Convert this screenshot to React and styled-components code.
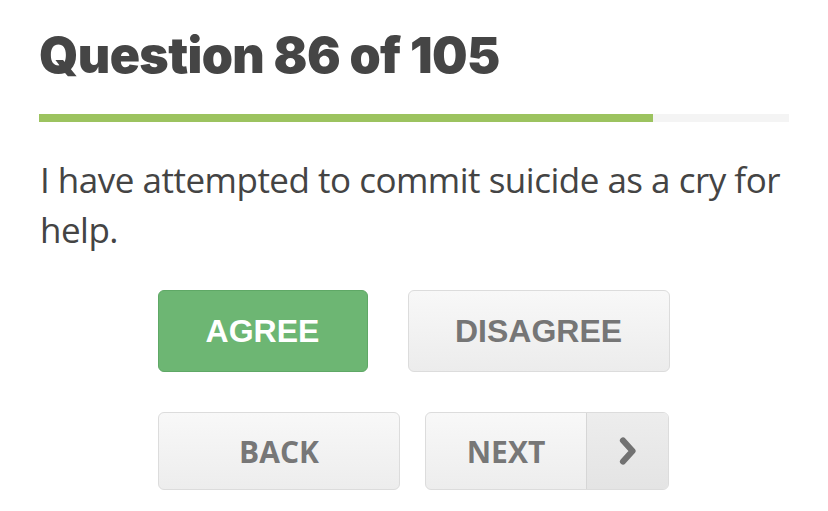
import React from "react";
import styled, { createGlobalStyle } from "styled-components";

const Global = createGlobalStyle`
  html, body { margin: 0; padding: 0; background: #fff; }
  * { box-sizing: border-box; }
`;

const Page = styled.div`
  width: 828px;
  height: 511px;
  padding: 24px 40px 0 39px;
  display: flex;
  flex-direction: column;
  background: #fff;
`;

const Title = styled.h1`
  margin: 0;
  font-family: "Inter", sans-serif;
  font-weight: 900;
  font-size: 50px;
  line-height: 62px;
  letter-spacing: -0.6px;
  color: #454545;
`;

const Track = styled.div`
  margin-top: 28px;
  height: 8px;
  width: 750px;
  background: #f4f4f4;
`;

const Fill = styled.div`
  height: 100%;
  background: #9cc35f;
`;

const Statement = styled.p`
  margin: 33px 0 0 1px;
  font-family: "Open Sans", sans-serif;
  font-size: 35px;
  line-height: 50px;
  color: #444;
  letter-spacing: -0.5px;
`;

const Row = styled.div`
  display: flex;
  justify-content: center;
  gap: ${(p) => p.$gap}px;
  margin-top: ${(p) => p.$top}px;
`;

const Choice = styled.button`
  width: ${(p) => p.$w}px;
  height: 82px;
  border-radius: 6px;
  font-family: "Liberation Sans", Arial, sans-serif;
  font-weight: 700;
  font-size: 32px;
  cursor: pointer;
  padding: 0;
  ${(p) =>
    p.$active
      ? `
    background: #6db673;
    border: 1px solid #5fa866;
    color: #fff;
  `
      : `
    background: linear-gradient(#f8f8f8, #ececec);
    border: 1px solid #dcdcdc;
    color: #767676;
  `}
`;

const NavButton = styled.button`
  width: ${(p) => p.$w}px;
  height: 78px;
  border-radius: 6px;
  border: 1px solid #dcdcdc;
  background: linear-gradient(#f8f8f8, #ededed);
  font-family: "Open Sans", sans-serif;
  font-weight: 700;
  font-size: 30px;
  color: #777;
  padding: 0;
  display: flex;
  align-items: stretch;
  overflow: hidden;
  cursor: pointer;
`;

const Label = styled.span`
  flex: 1;
  display: flex;
  align-items: center;
  justify-content: center;
`;

const ArrowPart = styled.span`
  width: 82px;
  display: flex;
  align-items: center;
  justify-content: center;
  border-left: 1px solid #d6d6d6;
  background: linear-gradient(#ededed, #e4e4e4);
`;

export default function App() {
  return (
    <>
      <Global />
      <Page>
        <Title>Question 86 of 105</Title>
        <Track>
          <Fill style={{ width: `${(86 / 105) * 100}%` }} />
        </Track>
        <Statement>I have attempted to commit suicide as a cry for help.</Statement>
        <Row $gap={40} $top={35}>
          <Choice $active $w={210}>AGREE</Choice>
          <Choice $w={262}>DISAGREE</Choice>
        </Row>
        <Row $gap={25} $top={40}>
          <NavButton $w={242}>
            <Label>BACK</Label>
          </NavButton>
          <NavButton $w={244}>
            <Label>NEXT</Label>
            <ArrowPart>
              <svg width="22" height="30" viewBox="0 0 22 30">
                <path d="M6 4.5 L15.5 15 L6 25.5" fill="none" stroke="#727272" strokeWidth="6.2" strokeLinecap="round" strokeLinejoin="round" />
              </svg>
            </ArrowPart>
          </NavButton>
        </Row>
      </Page>
    </>
  );
}
